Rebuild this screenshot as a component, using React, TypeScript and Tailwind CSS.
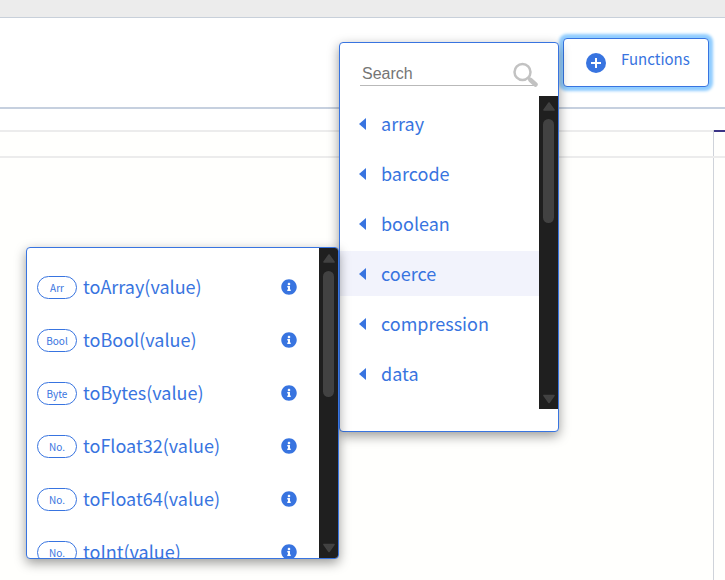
import { FaInfoCircle } from "react-icons/fa";

const categories = ["array", "barcode", "boolean", "coerce", "compression", "data"];

const functions = [
  { type: "Arr", name: "toArray(value)" },
  { type: "Bool", name: "toBool(value)" },
  { type: "Byte", name: "toBytes(value)" },
  { type: "No.", name: "toFloat32(value)" },
  { type: "No.", name: "toFloat64(value)" },
  { type: "No.", name: "toInt(value)" },
];

function ScrollBar({ thumb }: { thumb: string }) {
  return (
    <div aria-hidden="true" className="flex w-[19px] shrink-0 flex-col items-center justify-between bg-[#1f1f1f] pt-1.5 pb-[5px]">
      <div className="flex flex-col items-center gap-2">
        <svg className="h-[9px] w-3" viewBox="0 0 12 9">
          <path d="M6 1 11 8H1Z" fill="#424242" stroke="#424242" strokeWidth="1.6" strokeLinejoin="round" />
        </svg>
        <div className={`w-[11px] rounded-full bg-[#424242] ${thumb}`} />
      </div>
      <svg className="h-[10px] w-3" viewBox="0 0 12 10">
        <path d="M6 8.500 1 1.500h10Z" fill="#424242" stroke="#424242" strokeWidth="1.6" strokeLinejoin="round" />
      </svg>
    </div>
  );
}

function CategoryMenu() {
  return (
    <div className="flex h-[390px] w-[220px] flex-col rounded border border-[#3874e0] bg-white pt-4 shadow-[0_4px_12px_rgba(0,0,0,0.4)]">
      <div className="mr-5 ml-5 flex h-[37px] items-start">
        <label htmlFor="search" className="sr-only">Search functions</label>
        <div className="relative w-full">
          <input
            id="search"
            type="text"
            placeholder="Search"
            className="block h-[27px] w-[174px] border-b border-[#b9b9b9] bg-transparent pt-1 pl-0.5 font-['Liberation_Sans',Arial,sans-serif] text-[16px] leading-5 outline-none placeholder:text-[#757575]"
          />
          <svg aria-hidden="true" className="absolute top-[3px] right-0 size-[26px]" viewBox="0 0 26 26" fill="none" stroke="#c2c2c2">
            <circle cx="10.500" cy="10" r="8" strokeWidth="2.500" />
            <path d="M16 15.500 18.500 18" strokeWidth="3" />
            <path d="M18.500 18l5 4.500" strokeWidth="4.500" strokeLinecap="round" />
          </svg>
        </div>
      </div>
      <div className="flex h-[313px]">
        <ul className="flex flex-1 flex-col gap-[5px] pt-[5px]">
          {categories.map((name) => (
            <li key={name}>
              <button
                type="button"
                className={`flex h-[45px] w-full items-center gap-[15px] pl-[19px] text-[18px] leading-6 text-[#3874e0] ${name === "coerce" ? "bg-[#f2f3fc]" : ""}`}
              >
                <svg aria-hidden="true" className="h-3 w-[7px]" viewBox="0 0 7 12">
                  <path d="M7 0v12L0 6Z" fill="currentColor" />
                </svg>
                <span className="pb-0.5">{name}</span>
              </button>
            </li>
          ))}
        </ul>
        <ScrollBar thumb="h-[104px]" />
      </div>
    </div>
  );
}

function FunctionList() {
  return (
    <div className="z-10 mt-[205px] flex h-[312px] w-[313px] overflow-hidden rounded border border-[#3874e0] bg-white shadow-[0_4px_12px_rgba(0,0,0,0.4)]">
      <ul className="flex flex-1 flex-col gap-[30px] overflow-hidden pt-7 pr-[22px] pl-2.5">
        {functions.map((fn) => (
          <li key={fn.name} className="flex h-[23px] shrink-0 items-center text-[#3874e0]">
            <span className="flex h-[23px] w-10 items-center justify-center rounded-full border border-[#3874e0] pt-px text-[10px] leading-4">
              {fn.type}
            </span>
            <button type="button" className="ml-1.5 pb-[3px] text-[18px] leading-6">
              {fn.name}
            </button>
            <button type="button" aria-label={`About ${fn.name}`} className="ml-auto flex pb-px">
              <FaInfoCircle className="size-4" />
            </button>
          </li>
        ))}
      </ul>
      <ScrollBar thumb="h-[126px]" />
    </div>
  );
}

export default function App() {
  return (
    <div className="flex min-h-screen flex-col overflow-hidden bg-[#fffffd] font-['Noto_Sans_CJK_JP',sans-serif]">
      <div className="h-[18px] border-b border-[#c8d0da] bg-[#ececec]" />
      <header className="flex h-[91px] items-start justify-end border-b-2 border-[#c6d0df] bg-white pt-5 pr-4">
        <div className="relative">
          <button
            type="button"
            className="flex h-[49px] w-[146px] items-center rounded border border-[#3874e0] bg-white pl-[22px] text-[#3874e0] shadow-[0_0_3px_4px_#90cdff]"
          >
            <svg aria-hidden="true" className="size-5" viewBox="0 0 20 20">
              <circle cx="10" cy="10" r="10" fill="currentColor" />
              <path d="M10 5v10M5 10h10" stroke="white" strokeWidth="2" />
            </svg>
            <span className="mb-2 ml-[15px] text-[15px] leading-5">Functions</span>
          </button>
          <div className="absolute top-1 right-full z-10 mr-1 flex items-start">
            <FunctionList />
            <CategoryMenu />
          </div>
        </div>
      </header>
      <main className="flex flex-1 flex-col">
        <div className="h-[21px] bg-white" />
        <div className="flex h-7 border-b-2 border-[#ececec]">
          <div className="flex-1 border-t-2 border-[#ececec]" />
          <div className="w-3 border-l border-[#cfd3da]">
            <div className="h-0.5 bg-[#3b3486]" />
          </div>
        </div>
        <div className="flex flex-1">
          <div className="flex-1" />
          <div className="w-3 border-l border-[#cfd3da]" />
        </div>
      </main>
    </div>
  );
}
